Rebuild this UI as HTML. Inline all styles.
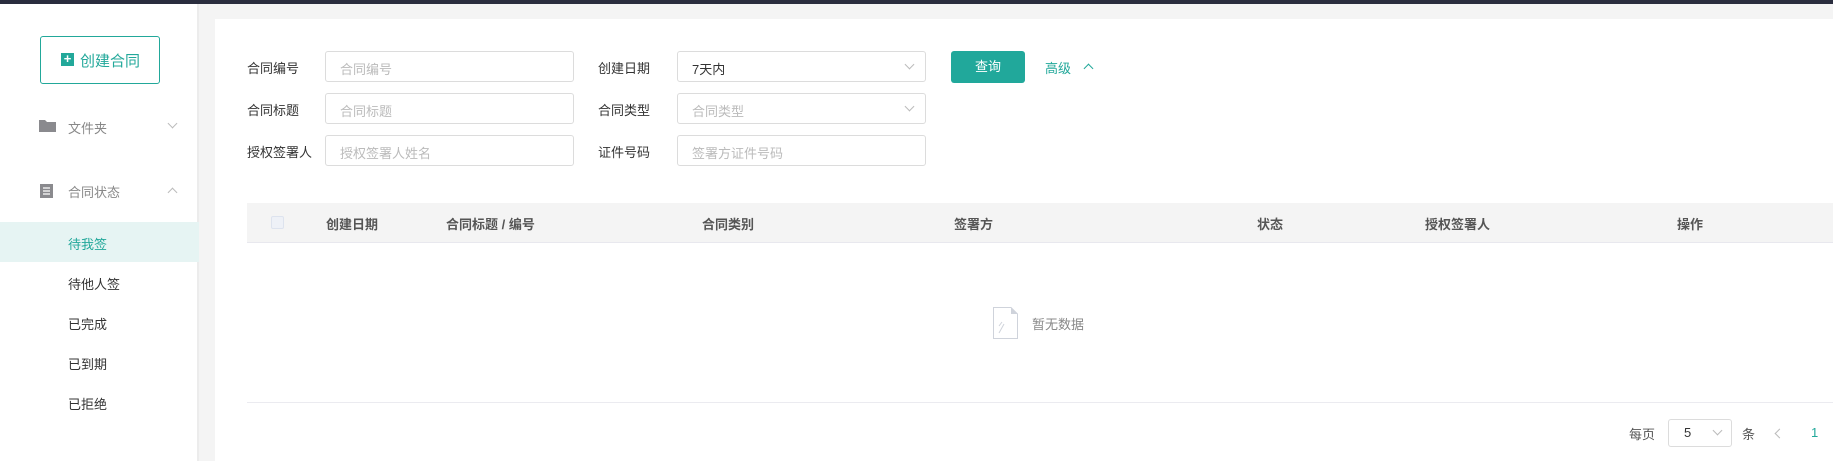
<!DOCTYPE html>
<html><head><meta charset="utf-8"><style>
*{margin:0;padding:0;box-sizing:border-box}
body{width:1833px;height:461px;overflow:hidden;background:#f4f4f4;font-family:"Liberation Sans","Noto Sans CJK SC",sans-serif;font-size:14px;color:#333;position:relative}
.a{position:absolute;white-space:nowrap}
.top{left:0;top:0;width:1833px;height:4px;background:#2a2d3e}
.side{left:0;top:4px;width:199px;height:457px;background:#fff;border-right:2px solid #ececec}
.panel{left:215px;top:19px;width:1618px;height:442px;background:#fff}
.inp{height:31px;border:1px solid #dcdcdc;border-radius:3px;background:#fff}
.ph{color:#bbb;font-size:13px}
.lbl{font-size:13px;color:#333}
.th{font-size:13px;color:#555;font-weight:bold;top:214px}
.chev{width:7px;height:7px;border-right:1px solid #bbb;border-bottom:1px solid #bbb;transform:rotate(45deg)}
</style></head><body>
<div class="a top"></div>
<div class="a side"></div>
<div class="a panel"></div>

<div class="a" style="left:40px;top:36px;width:120px;height:48px;border:1px solid #22a89a;border-radius:3px"></div>
<div class="a" style="left:61px;top:53px;width:13px;height:13px;background:#22a89a;color:#fff;font-size:13px;line-height:12px;text-align:center;font-weight:bold">+</div>
<div class="a" style="left:80px;top:50px;color:#22a89a;font-size:15px">创建合同</div>

<svg class="a" style="left:39px;top:120px" width="17" height="12"><path d="M0 0H6L8 2H17V12H0Z" fill="#8a8a8e"/></svg>
<div class="a" style="left:68px;top:118px;color:#888;font-size:13px">文件夹</div>
<div class="a chev" style="left:169px;top:120px"></div>
<svg class="a" style="left:40px;top:184px" width="13" height="14"><rect width="13" height="14" fill="#8a8a8e"/><path d="M3 4H10M3 7H10M3 10H10" stroke="#fff" stroke-width="1.2"/></svg>
<div class="a" style="left:68px;top:182px;color:#888;font-size:13px">合同状态</div>
<div class="a chev" style="left:169px;top:189px;transform:rotate(-135deg)"></div>

<div class="a" style="left:0;top:222px;width:199px;height:40px;background:#e6f4f3"></div>
<div class="a" style="left:68px;top:234px;color:#22a89a;font-size:13px">待我签</div>
<div class="a" style="left:68px;top:274px;font-size:13px">待他人签</div>
<div class="a" style="left:68px;top:314px;font-size:13px">已完成</div>
<div class="a" style="left:68px;top:354px;font-size:13px">已到期</div>
<div class="a" style="left:68px;top:394px;font-size:13px">已拒绝</div>

<div class="a lbl" style="left:247px;top:58px">合同编号</div>
<div class="a lbl" style="left:247px;top:100px">合同标题</div>
<div class="a lbl" style="left:247px;top:142px">授权签署人</div>
<div class="a inp" style="left:325px;top:51px;width:249px"></div>
<div class="a ph" style="left:340px;top:59px">合同编号</div>
<div class="a inp" style="left:325px;top:93px;width:249px"></div>
<div class="a ph" style="left:340px;top:101px">合同标题</div>
<div class="a inp" style="left:325px;top:135px;width:249px"></div>
<div class="a ph" style="left:340px;top:143px">授权签署人姓名</div>

<div class="a lbl" style="left:598px;top:58px">创建日期</div>
<div class="a lbl" style="left:598px;top:100px">合同类型</div>
<div class="a lbl" style="left:598px;top:142px">证件号码</div>
<div class="a inp" style="left:677px;top:51px;width:249px"></div>
<div class="a" style="left:692px;top:59px;font-size:13px">7天内</div>
<div class="a chev" style="left:906px;top:61px"></div>
<div class="a inp" style="left:677px;top:93px;width:249px"></div>
<div class="a ph" style="left:692px;top:101px">合同类型</div>
<div class="a chev" style="left:906px;top:103px"></div>
<div class="a inp" style="left:677px;top:135px;width:249px"></div>
<div class="a ph" style="left:692px;top:143px">签署方证件号码</div>

<div class="a" style="left:951px;top:51px;width:74px;height:32px;background:#21a89b;border-radius:3px;color:#fff;font-size:13px;text-align:center;line-height:32px">查询</div>
<div class="a" style="left:1045px;top:58px;color:#22a89a;font-size:13px">高级</div>
<div class="a chev" style="left:1085px;top:65px;border-color:#22a89a;transform:rotate(-135deg)"></div>

<div class="a" style="left:247px;top:203px;width:1586px;height:40px;background:#f4f4f4;border-bottom:1px solid #e8e8ee"></div>
<div class="a" style="left:271px;top:216px;width:13px;height:13px;border:1px solid #dde3ee;background:#eef1f7;border-radius:2px"></div>
<div class="a th" style="left:326px">创建日期</div>
<div class="a th" style="left:446px">合同标题 / 编号</div>
<div class="a th" style="left:702px">合同类别</div>
<div class="a th" style="left:954px">签署方</div>
<div class="a th" style="left:1257px">状态</div>
<div class="a th" style="left:1425px">授权签署人</div>
<div class="a th" style="left:1677px">操作</div>

<svg class="a" style="left:993px;top:307px" width="25" height="32"><path d="M0.5 0.5H18L24.5 7V31.5H0.5Z" fill="#fff" stroke="#cfd3db"/><path d="M18 0.5V7H24.5Z" fill="#cfd3db"/><path d="M9 15L6 19M11 17L6 26" stroke="#cfd3db"/></svg>
<div class="a" style="left:1032px;top:314px;color:#888;font-size:13px">暂无数据</div>

<div class="a" style="left:247px;top:402px;width:1586px;height:1px;background:#ebebf0"></div>
<div class="a" style="left:1629px;top:424px;color:#555;font-size:13px">每页</div>
<div class="a inp" style="left:1668px;top:419px;width:64px;height:28px"></div>
<div class="a" style="left:1684px;top:425px;font-size:13px">5</div>
<div class="a chev" style="left:1714px;top:427px"></div>
<div class="a" style="left:1742px;top:424px;color:#555;font-size:13px">条</div>
<div class="a chev" style="left:1776px;top:430px;transform:rotate(135deg)"></div>
<div class="a" style="left:1811px;top:425px;color:#22a89a;font-size:13px">1</div>
</body></html>
